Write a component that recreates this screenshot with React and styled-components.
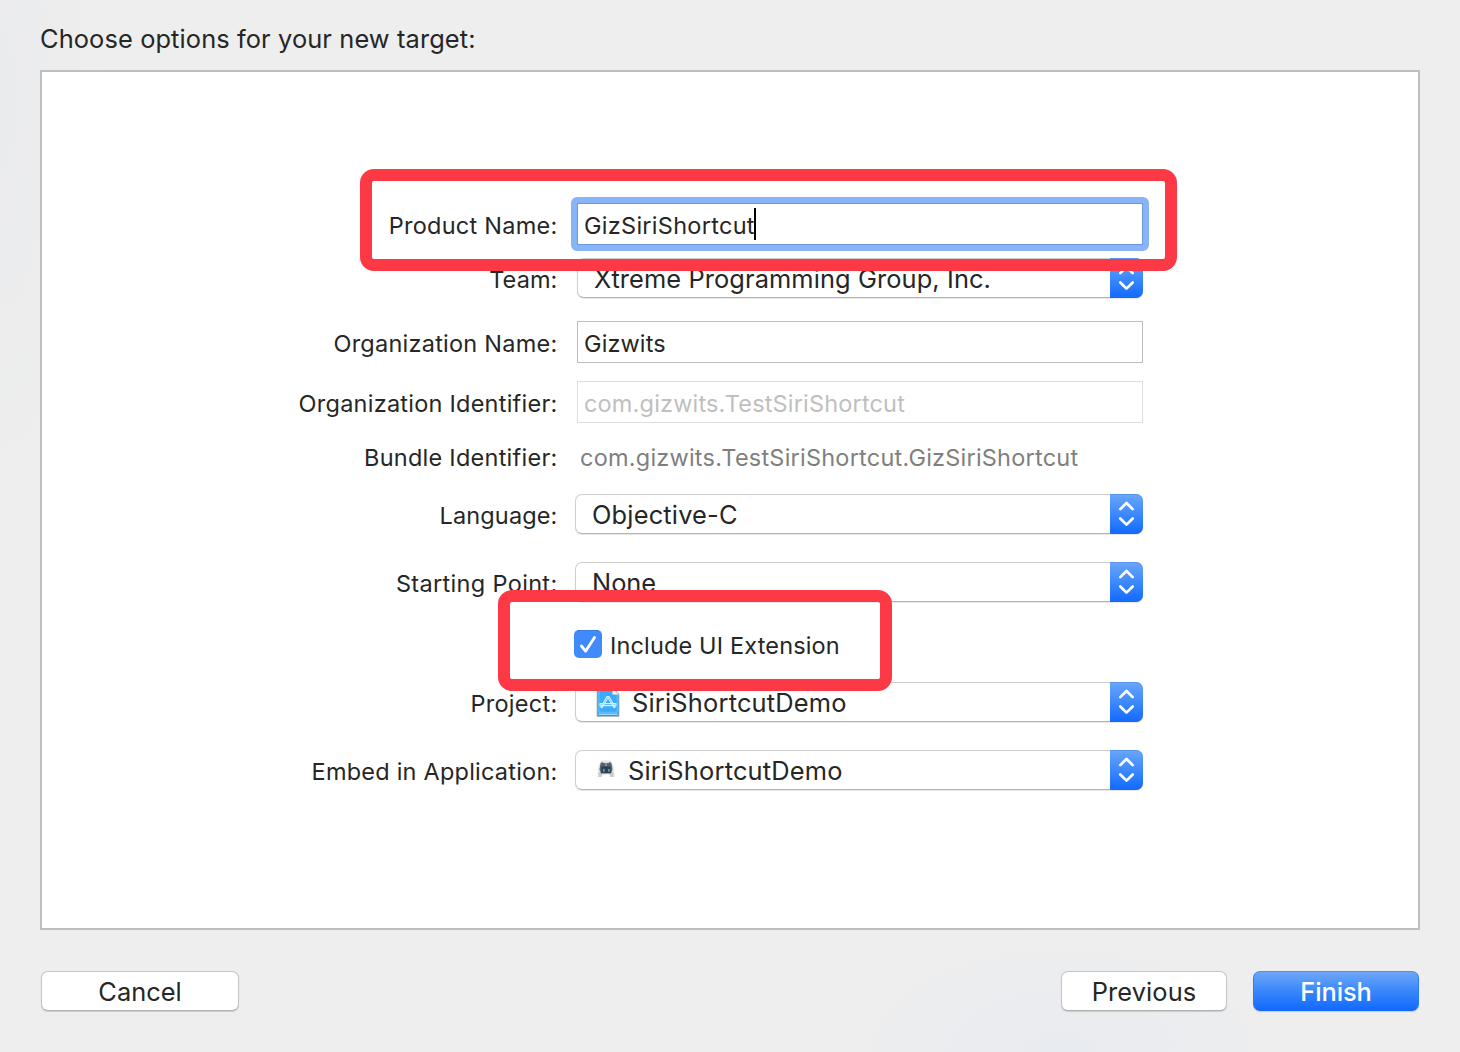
import React from "react";
import styled, { createGlobalStyle, css } from "styled-components";

const GlobalStyle = createGlobalStyle`
  * { box-sizing: border-box; }
  body {
    margin: 0;
    font-family: Inter, "Liberation Sans", sans-serif;
    color: #262626;
    -webkit-font-smoothing: antialiased;
  }
`;

const Sheet = styled.main`
  width: 1460px;
  height: 1052px;
  padding: 0 40px;
  display: flex;
  flex-direction: column;
  overflow: hidden;
  background:
    radial-gradient(ellipse 230px 120px at 1060px 1052px, #e8ebf0, rgba(232, 235, 240, 0)),
    radial-gradient(ellipse 100px 420px at 0 100px, #eaebed, rgba(234, 235, 237, 0)),
    #eeeeee;
`;

const Text = styled.span`
  font-size: ${(p) => p.$size || 23.5}px;
  letter-spacing: ${(p) => p.$track || 0}px;
  font-weight: ${(p) => p.$weight || 400};
  white-space: nowrap;
`;

const Heading = styled.h1`
  margin: 0;
  height: 70px;
  padding-top: 8px;
  line-height: 62px;
  font-weight: 400;
  font-size: 25.4px;
  letter-spacing: 0.11px;
`;

const Panel = styled.section`
  position: relative;
  height: 860px;
  border: 2px solid #bebebe;
  background: #fff;
  padding-top: 131px;
`;

const Row = styled.div`
  display: grid;
  grid-template-columns: 516px 1fr;
  column-gap: ${(p) => p.$gap || 17}px;
  height: ${(p) => p.$height || 40}px;
  margin-bottom: ${(p) => p.$after || 0}px;
`;

const Label = styled.label`
  justify-self: end;
  height: 40px;
  line-height: 40px;
  margin-top: ${(p) => p.$shift || 0}px;
  margin-right: 0.5px;
`;

const Field = styled.div`
  position: relative;
  display: flex;
  align-items: center;
  width: 566px;
  height: 42px;
  padding: 3px 0 0 6px;
  border: 1px solid ${(p) => (p.$disabled ? "#dedede" : "#bdbdbd")};
  color: ${(p) => (p.$disabled ? "#bfbfbf" : "#262626")};
  background: #fff;
  ${(p) =>
    p.$focused &&
    css`
      border-color: #6c97dc;
      &::before {
        content: "";
        position: absolute;
        inset: -7px;
        border: 6px solid #89b4f8;
        border-radius: 6px;
      }
    `}
`;

const Caret = styled.i`
  width: 2px;
  height: 32px;
  margin: -4px 0 0 -1px;
  background: #000;
`;

const PopupBox = styled.div`
  display: flex;
  width: ${(p) => p.$width || 568}px;
  height: 40px;
  border: 1px solid #cfcfcf;
  border-bottom-color: #b5b5b5;
  border-radius: 7px;
  box-shadow: 0 1px 1px rgba(0, 0, 0, 0.1);
  background: #fff;
`;

const PopupValue = styled.div`
  flex: 1;
  display: flex;
  align-items: center;
  padding-left: ${(p) => p.$inset || 16}px;
`;

const Stepper = styled.div`
  width: 33px;
  height: 40px;
  margin: -1px;
  border-radius: 0 7px 7px 0;
  background: linear-gradient(#6ba6f9, #3d89fb 50%, #1269fd);
  box-shadow: inset 0 1px 0 rgba(60, 120, 220, 0.35);
`;

const Bundle = styled.div`
  padding-left: 5px;
  line-height: 40px;
  color: #7f7f7f;
`;

const CheckRow = styled.div`
  display: flex;
  align-items: center;
  gap: 8px;
  height: 28px;
  margin: 0 0 24px 532px;
`;

const CheckBox = styled.div`
  width: 28px;
  height: 28px;
  border-radius: 5px;
  background: #418af9;
  border-top: 1px solid #397de8;
`;

const CheckLabel = styled.label`
  padding-top: 3px;
`;

const Highlight = styled.div`
  position: absolute;
  left: ${(p) => p.$x}px;
  top: ${(p) => p.$y}px;
  width: ${(p) => p.$w}px;
  height: ${(p) => p.$h}px;
  border: 12px solid #fd3946;
  border-radius: 14px;
`;

const Footer = styled.footer`
  display: flex;
  gap: 26px;
  padding: 41px 1px 0;
`;

const Button = styled.button`
  width: ${(p) => p.$width}px;
  height: 40px;
  padding: 0;
  margin-right: ${(p) => (p.$push ? "auto" : 0)};
  border: 1px solid #c6c6c6;
  border-bottom-color: #b0b0b0;
  border-radius: 7px;
  background: #fff;
  color: #262626;
  font-family: inherit;
  box-shadow: 0 1px 1px rgba(0, 0, 0, 0.14);
  ${(p) =>
    p.$primary &&
    css`
      color: #fff;
      border-color: #4b8fee #2e7cf4 #1368f5;
      background: linear-gradient(#6da7f9, #3a87fb 50%, #1269fd);
    `}
`;

const Arrows = () => (
  <svg width="33" height="40" viewBox="0 0 33 40" fill="none" stroke="#fff" strokeWidth="2.7" strokeLinecap="round" strokeLinejoin="round">
    <path d="M10.3 15.1 16.5 9l6.2 6.1M10.3 24.5l6.2 6.1 6.2-6.1" />
  </svg>
);

const ProjectIcon = () => (
  <svg width="24" height="32" viewBox="0 0 24 32">
    <path d="M1 1h15l7 7v22.5H1z" fill="#239bf5" stroke="#b4b9be" strokeWidth=".8" />
    <path d="M2.8 2.5h12.5l6 6v17.8H2.8z" fill="#38abfb" stroke="#8fd2fd" strokeWidth=".7" />
    <path d="M2.5 28.2h19" stroke="#cceaff" strokeWidth="1.1" />
    <path d="M16.5 2v6.4h6.2z" fill="#f1f5f8" stroke="#bcc7d0" strokeWidth=".5" />
    <g fill="none" stroke="#d5eeff" strokeWidth="1.1" strokeLinecap="round" strokeLinejoin="round">
      <path d="m11 10.5-6.2 10.7 1.2.6 6-10M13 10.5l6.2 10.7-1.2.6-6-10M11 10.5h2M4 17.6h16v2H4z" />
    </g>
  </svg>
);

const AppIcon = () => (
  <svg width="20" height="20" viewBox="0 0 20 20">
    <path d="M5 1.5h10l2.5 5.5 1 11h-4l-1.5-2.5H7L5.5 18h-4l1-11z" fill="#e3e3e3" />
    <path d="M2.5 13.5h4L5.5 18h-3zM13.5 13.5h4V18h-3z" fill="#cccccc" />
    <path d="M4.5 4.5 6 3l1.5 1h5L14 3l1.5 1.5 1 6-1.5 4H5l-1.5-4z" fill="#56616d" />
    <path d="M5.5 7.5h9V14h-9z" fill="#2c414f" />
    <path d="M7 10h1.7v2.8H7zM12 10h1.7v2.8H12z" fill="#5c9ba8" />
    <path d="M9 4h2v3H9z" fill="#85909a" />
  </svg>
);

const Check = () => (
  <svg width="28" height="27" viewBox="0 0 28 27" fill="none" stroke="#fff" strokeWidth="2.8" strokeLinecap="round" strokeLinejoin="round">
    <path d="m7.4 15 4.2 5.2L20.5 6.5" />
  </svg>
);

const Popup = ({ value, icon, inset, width, track }) => (
  <PopupBox $width={width}>
    <PopupValue $inset={inset}>
      {icon}
      <Text $size={25.4} $track={track}>{value}</Text>
    </PopupValue>
    <Stepper><Arrows /></Stepper>
  </PopupBox>
);

const IconSlot = styled.span`
  display: flex;
  width: ${(p) => p.$w}px;
  margin-top: ${(p) => p.$up}px;
`;

export default function App() {
  return (
    <>
      <GlobalStyle />
      <Sheet>
        <Heading>Choose options for your new target:</Heading>
        <Panel>
          <Row $height={42} $after={13} $gap={19}>
            <Label $shift={3}><Text $track={0.25}>Product Name:</Text></Label>
            <Field $focused><Text $track={0.28}>GizSiriShortcut</Text><Caret /></Field>
          </Row>
          <Row $height={40} $after={23} $gap={19}>
            <Label $shift={2}><Text $track={0.1}>Team:</Text></Label>
            <Popup width={566} track={0.1} value="Xtreme Programming Group, Inc." />
          </Row>
          <Row $height={42} $after={18} $gap={19}>
            <Label $shift={3}><Text $track={0.24}>Organization Name:</Text></Label>
            <Field><Text $track={0.1}>Gizwits</Text></Field>
          </Row>
          <Row $height={42} $after={15} $gap={19}>
            <Label $shift={3}><Text $track={0.24}>Organization Identifier:</Text></Label>
            <Field $disabled><Text $track={0.17}>com.gizwits.TestSiriShortcut</Text></Field>
          </Row>
          <Row $height={40} $after={16}>
            <Label><Text $track={0.25}>Bundle Identifier:</Text></Label>
            <Bundle><Text $track={0.22}>com.gizwits.TestSiriShortcut.GizSiriShortcut</Text></Bundle>
          </Row>
          <Row $after={28}>
            <Label $shift={2}><Text $track={0.13}>Language:</Text></Label>
            <Popup value="Objective-C" track={0.18} />
          </Row>
          <Row $after={28}>
            <Label $shift={2}><Text $track={0.33}>Starting Point:</Text></Label>
            <Popup value="None" />
          </Row>
          <CheckRow>
            <CheckBox><Check /></CheckBox>
            <CheckLabel><Text $track={0.15}>Include UI Extension</Text></CheckLabel>
          </CheckRow>
          <Row $after={28}>
            <Label $shift={2}><Text $track={0.28}>Project:</Text></Label>
            <Popup value="SiriShortcutDemo" track={0.2} inset={20} icon={<IconSlot $w={36} $up={-1}><ProjectIcon /></IconSlot>} />
          </Row>
          <Row>
            <Label $shift={2}><Text $track={0.22}>Embed in Application:</Text></Label>
            <Popup value="SiriShortcutDemo" track={0.2} inset={20} icon={<IconSlot $w={32} $up={-3}><AppIcon /></IconSlot>} />
          </Row>
          <Highlight $x={318} $y={97} $w={817} $h={102} />
          <Highlight $x={456} $y={518} $w={394} $h={101} />
        </Panel>
        <Footer>
          <Button $width={198} $push><Text $size={25.4}>Cancel</Text></Button>
          <Button $width={166}><Text $size={25.4} $track={0.1}>Previous</Text></Button>
          <Button $width={166} $primary><Text $size={25.4} $weight={500} $track={-0.1}>Finish</Text></Button>
        </Footer>
      </Sheet>
    </>
  );
}
